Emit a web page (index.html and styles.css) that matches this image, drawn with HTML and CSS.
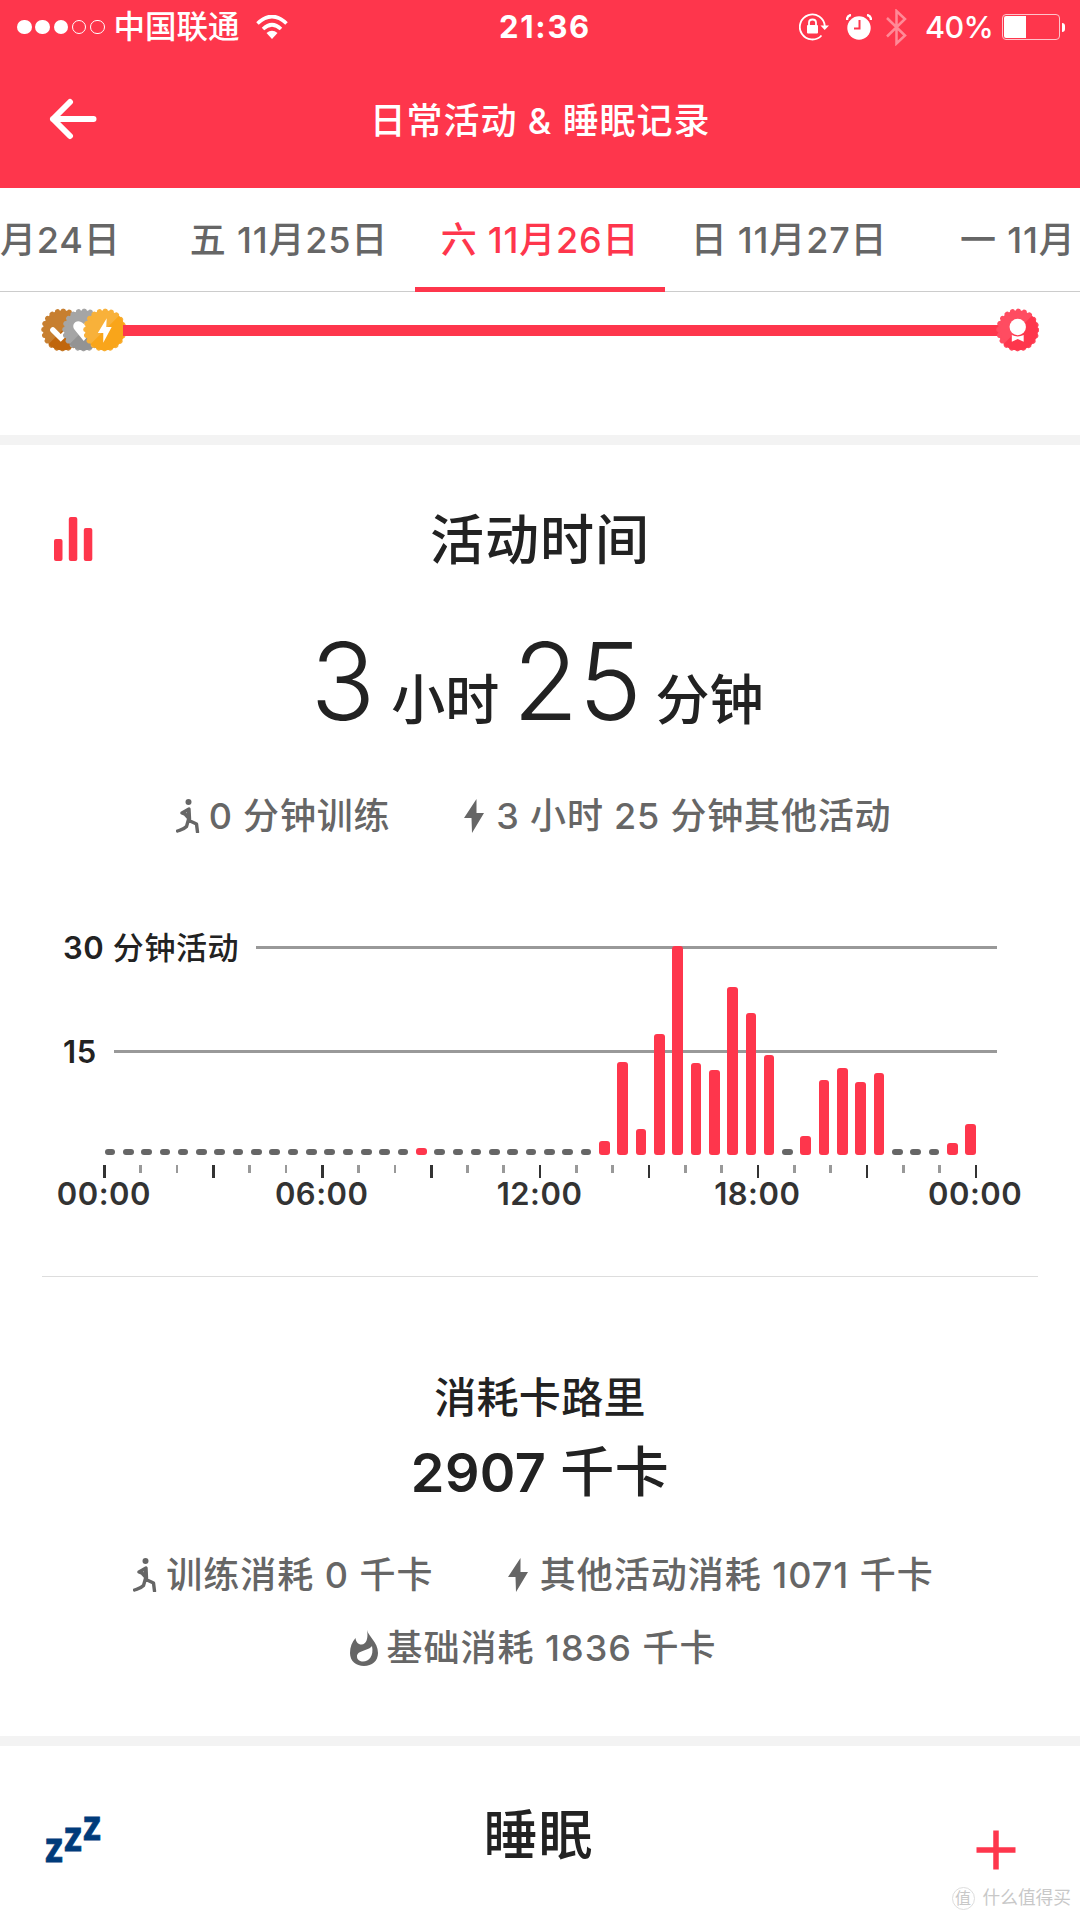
FILE: index.html
```html
<!DOCTYPE html>
<html lang="zh-CN">
<head>
    <meta charset="UTF-8">
    <meta name="viewport" content="width=device-width, initial-scale=1.0">
    <title>日常活动 & 睡眠记录</title>
    <link rel="stylesheet" href="styles.css">
</head>
<body>
    <!-- shared icons -->
    <svg class="defs" width="0" height="0">
        <symbol id="runner" viewBox="0 0 24 34">
            <circle cx="12.5" cy="3" r="3"/>
            <path d="M8.500 15L6 14L13 10L13.500 20L8.500 14.500M12.500 11L12.500 20.500L10.500 27.500C7 31 4 31 1.500 32M13 21.500L20.500 25L21.500 33" fill="none" stroke="currentColor" stroke-width="3.4" stroke-linejoin="round" stroke-linecap="round"/>
        </symbol>
        <symbol id="bolt" viewBox="0 0 20 34">
            <path d="M12.500 0L0 19H7.500L8 34L20 14H12.500Z"/>
        </symbol>
        <symbol id="flame" viewBox="0 0 28 36">
            <path fill-rule="evenodd" d="M17 0C18 6 28 12 28 23C28 31 22 36 14 36C6 36 0 31 0 23C0 17 2 12 5.500 8C6 12 8 14.500 11.500 14.500C16.500 14.500 18.500 8 17 0ZM22 16C19 21 7 20 7 26.500C7 30 10 31.500 13 31.500C19 31.500 24 26 22 16Z"/>
        </symbol>
        <symbol id="seal" viewBox="-22 -22 44 44">
            <circle r="20"/>
            <circle r="19.300" fill="none" stroke="currentColor" stroke-width="5" stroke-dasharray="0.1 5.963" stroke-linecap="round"/>
        </symbol>
    </svg>

    <header class="top">
        <div class="status-bar">
            <div class="status-left">
                <span class="dot"></span><span class="dot"></span><span class="dot"></span><span class="dot empty"></span><span class="dot empty"></span>
                <span class="carrier">中国联通</span>
                <svg class="wifi" width="32" height="25" viewBox="0 0 32 25">
                    <path d="M1.500 8.500Q16 -5.500 30.500 8.500M7 14Q16 5.500 25 14" fill="none" stroke="#fff" stroke-width="3.600"/>
                    <path d="M10.500 18Q16 13.500 21.500 18L16 24Z" fill="#fff"/>
                </svg>
            </div>
            <div class="time">21:36</div>
            <div class="status-right">
                <svg width="30" height="28" viewBox="0 0 30 28">
                    <path d="M25.800 13A12.500 12.500 0 1 0 22.500 22.500" fill="none" stroke="#fff" stroke-width="1.800"/>
                    <path d="M21.500 12.500H30L25.700 17Z" fill="#fff"/>
                    <rect x="8" y="12" width="11" height="8.500" rx="1" fill="#fff"/>
                    <path d="M10 13V9.500Q10 6.500 13.500 6.500T17 9.500V13" fill="none" stroke="#fff" stroke-width="1.800"/>
                </svg>
                <svg class="alarm" width="26" height="26" viewBox="0 0 26 26">
                    <circle cx="13" cy="14" r="11.700" fill="#fff"/>
                    <path d="M1 6Q1 1.500 5 1M25 6Q25 1.500 21 1" fill="none" stroke="#fff" stroke-width="2.400"/>
                    <path d="M13.500 6V14.500H8" fill="none" stroke="#fe364c" stroke-width="2"/>
                </svg>
                <svg class="bluetooth" width="21" height="37" viewBox="0 0 21 37">
                    <path d="M1 9L19 26.500L10.500 34.500V2L19 10L1 27.500" fill="none" stroke="#ff8a97" stroke-width="2.500"/>
                </svg>
                <span class="percent">40%</span>
                <span class="battery"><span class="battery-level"></span></span>
                <span class="battery-cap"></span>
            </div>
        </div>
        <div class="title-bar">
            <svg class="back" width="48" height="42" viewBox="0 0 48 42">
                <path d="M21 4L4 21L21 38M4 21H44.500" fill="none" stroke="#fff" stroke-width="6" stroke-linecap="round" stroke-linejoin="round"/>
            </svg>
            <h1>日常活动 &amp; 睡眠记录</h1>
        </div>
    </header>

    <nav class="tabs">
        <a class="tab first">月24日</a>
        <a class="tab">五 11月25日</a>
        <a class="tab active">六 11月26日</a>
        <a class="tab">日 11月27日</a>
        <a class="tab last">一 11月</a>
    </nav>

    <section class="goal">
        <div class="badges">
            <svg class="badge bronze" viewBox="-22 -22 44 44">
                <use href="#seal" x="-22" y="-22" width="44" height="44"/>
                <path d="M-14.500 14.500L14.500 -14.500A20.500 20.500 0 0 1 -14.500 14.500Z" fill="#c0660c"/>
                <path d="M-10 0L-2 8L10 -4" fill="none" stroke="#fff" stroke-width="5.500" stroke-linecap="round"/>
            </svg>
            <svg class="badge silver" viewBox="-22 -22 44 44">
                <use href="#seal" x="-22" y="-22" width="44" height="44"/>
                <path d="M-14.500 14.500L14.500 -14.500A20.500 20.500 0 0 1 -14.500 14.500Z" fill="#939393"/>
                <path d="M0 11L-9 0C-14 -6 -6 -13 0 -6C6 -13 14 -6 9 0Z" fill="#fff"/>
            </svg>
            <svg class="badge gold" viewBox="-22 -22 44 44">
                <use href="#seal" x="-22" y="-22" width="44" height="44"/>
                <path d="M-14.500 14.500L14.500 -14.500A20.500 20.500 0 0 1 -14.500 14.500Z" fill="#f9a51a"/>
                <path d="M2 -12L-7 3H-1.500L-1.500 13L7 -3H1.500Z" fill="#fff"/>
            </svg>
        </div>
        <div class="goal-line"></div>
        <svg class="badge red" viewBox="-22 -22 44 44">
            <use href="#seal" x="-22" y="-22" width="44" height="44"/>
            <path d="M-14.500 14.500L14.500 -14.500A20.500 20.500 0 0 1 -14.500 14.500Z" fill="#fe364c"/>
            <circle cy="-3" r="8.300" fill="#fff"/>
            <path d="M-6 5Q0 8 6 5V12L0 9L-6 12Z" fill="#fff"/>
        </svg>
    </section>

    <section class="card activity">
        <div class="card-head">
            <svg class="chart-icon" width="39" height="44" viewBox="0 0 39 44" fill="#fe364c">
                <rect x="0" y="22" width="8.500" height="22" rx="2"/>
                <rect x="14.800" y="0" width="8.500" height="44" rx="2"/>
                <rect x="29.800" y="11" width="8.500" height="33" rx="2"/>
            </svg>
            <h2>活动时间</h2>
        </div>
        <div class="duration">
            <b>3</b><span class="hour-unit">小时</span><b>25</b><span class="minute-unit">分钟</span>
        </div>
        <div class="stats active-stats">
            <div class="stat"><svg class="runner"><use href="#runner"/></svg><span>0 分钟训练</span></div>
            <div class="stat"><svg class="bolt"><use href="#bolt"/></svg><span>3 小时 25 分钟其他活动</span></div>
        </div>

        <div class="chart">
            <div class="grid-line"><span>30 <em>分钟活动</em></span><i></i></div>
            <div class="grid-line half"><span>15</span><i></i></div>
            <div class="bars" id="bars"></div>
            <div class="ticks" id="ticks"></div>
            <div class="hours">
                <span>00:00</span><span>06:00</span><span>12:00</span><span>18:00</span><span>00:00</span>
            </div>
        </div>

        <div class="calories">
            <h3>消耗卡路里</h3>
            <div class="total">2907 <em>千卡</em></div>
            <div class="stats">
                <div class="stat"><svg class="runner"><use href="#runner"/></svg><span>训练消耗 0 千卡</span></div>
                <div class="stat"><svg class="bolt"><use href="#bolt"/></svg><span>其他活动消耗 1071 千卡</span></div>
            </div>
            <div class="stats base-stats">
                <div class="stat"><svg class="flame"><use href="#flame"/></svg><span>基础消耗 1836 千卡</span></div>
            </div>
        </div>
    </section>

    <section class="card sleep">
        <svg class="zzz" width="60" height="84" viewBox="0 -24 60 84">
            <text x="0" y="44" textLength="18" lengthAdjust="spacingAndGlyphs">z</text>
            <text x="19" y="33" textLength="18" lengthAdjust="spacingAndGlyphs">z</text>
            <text x="38" y="22" textLength="18" lengthAdjust="spacingAndGlyphs">z</text>
        </svg>
        <h2>睡眠</h2>
        <svg class="plus" width="40" height="40" viewBox="0 0 40 40">
            <path d="M20 0.500V39.500M0.500 20H39.500" stroke="#fe364c" stroke-width="5.500"/>
        </svg>
    </section>

    <div class="watermark"><span class="mark">值</span>什么值得买</div>

    <script>
        // height of every half hour in px, 0 = no activity
        const halfHours = [
            0, 0, 0, 0, 0, 0, 0, 0, 0, 0, 0, 0,
            0, 0, 0, 0, 0, 7, 0, 0, 0, 0, 0, 0,
            0, 0, 0, 14, 93, 26, 121, 209, 92, 85, 168, 142,
            100, 0, 19, 75, 87, 73, 82, 0, 0, 0, 12, 31
        ];
        const bars = document.getElementById('bars');
        halfHours.forEach((h) => {
            const bar = document.createElement('span');
            bar.className = h ? 'bar' : 'bar none';
            if (h) bar.style.height = h + 'px';
            bars.appendChild(bar);
        });

        const ticks = document.getElementById('ticks');
        for (let i = 0; i <= 24; i++) {
            const tick = document.createElement('span');
            tick.className = i % 3 ? 'tick' : 'tick major';
            ticks.appendChild(tick);
        }
    </script>
</body>
</html>
```
FILE: styles.css
```css
* {
    box-sizing: border-box;
}
body {
    width: 1080px;
    height: 1920px;
    margin: 0;
    overflow: hidden;
    position: relative;
    background: #fff;
    color: #222;
    font-family: Inter, "Noto Sans CJK SC", sans-serif;
    font-weight: 500;
}
h1, h2, h3 {
    margin: 0;
    font-weight: 500;
}
em {
    font-style: normal;
    font-weight: 500;
}
.defs {
    display: block;
}

/* header */
.top {
    height: 188px;
    background: #fe364c;
    color: #fff;
}
.status-bar {
    height: 54px;
    padding: 0 15px 0 17px;
    display: grid;
    grid-template-columns: 1fr auto 1fr;
    align-items: center;
    line-height: 54px;
}
.status-left, .status-right {
    display: flex;
    align-items: center;
}
.status-right {
    justify-content: flex-end;
}
.dot {
    width: 14.5px;
    height: 14.5px;
    margin-right: 3.8px;
    border-radius: 50%;
    background: #fff;
}
.dot.empty {
    background: none;
    border: 1px solid #fff;
}
.carrier {
    margin-left: 5px;
    font-size: 31.5px;
}
.wifi {
    margin-left: 16px;
}
.time {
    padding-left: 8px;
    font-size: 31px;
    font-weight: 700;
    letter-spacing: 1.7px;
}
.alarm {
    margin-left: 17px;
}
.bluetooth {
    margin-left: 14px;
}
.percent {
    margin-left: 18px;
    font-size: 30.5px;
    letter-spacing: -0.7px;
}
.battery {
    width: 58px;
    height: 26px;
    margin-left: 9px;
    padding: 1px;
    border: 1.5px solid #ffc3ca;
    border-radius: 4px;
}
.battery-level {
    display: block;
    width: 22px;
    height: 100%;
    border-radius: 2px 0 0 2px;
    background: #fff;
}
.battery-cap {
    width: 3px;
    height: 9px;
    margin-left: 2px;
    border-radius: 0 3px 3px 0;
    background: #fff;
}
.title-bar {
    height: 130px;
    padding-left: 49px;
    display: grid;
    grid-template-columns: 48px 1fr 97px;
    align-items: center;
}
h1 {
    padding-bottom: 3px;
    text-align: center;
    font-size: 36px;
    letter-spacing: 0.9px;
}

/* days */
.tabs {
    height: 104px;
    display: flex;
    border-bottom: 1px solid #ccc;
    color: #666;
    font-size: 36px;
    line-height: 104px;
    letter-spacing: 0.8px;
    white-space: nowrap;
}
.tab {
    flex: none;
    width: 250px;
    height: 104px;
    padding-right: 2px;
    text-align: center;
}
.tab.first {
    width: 165px;
    padding-right: 45px;
    text-align: right;
}
.tab.active {
    padding-right: 0;
    color: #fe364c;
    border-bottom: 5px solid #fe364c;
}
.tab.last {
    width: 165px;
    text-align: left;
    padding-left: 45px;
}

/* goal line */
.goal {
    height: 153px;
    padding: 16px 41px 0 40.5px;
    display: flex;
    align-items: flex-start;
    border-bottom: 10px solid #f3f3f3;
}
.badges {
    display: flex;
}
.badge {
    width: 43.5px;
    height: 44px;
    flex: none;
}
.badge + .badge {
    margin-left: -22.5px;
}
.bronze {
    fill: #c77f30;
    color: #c77f30;
}
.silver {
    fill: #a5a5a5;
    color: #a5a5a5;
}
.gold {
    fill: #f8b13a;
    color: #f8b13a;
}
.red {
    fill: #ff4c61;
    color: #ff4c61;
}
.goal-line {
    flex: 1;
    height: 11px;
    margin: 17px -3px 0;
    background: #fe364c;
}

/* activity */
.activity {
    height: 1301px;
    border-bottom: 10px solid #f3f3f3;
}
.card-head {
    height: 188px;
    padding: 0 54px;
    display: grid;
    grid-template-columns: 39px 1fr 39px;
    align-items: center;
}
.card-head h2 {
    padding-bottom: 6px;
}
h2 {
    text-align: center;
    font-size: 54px;
    letter-spacing: 1px;
}
.duration {
    height: 96px;
    display: flex;
    justify-content: center;
    align-items: baseline;
    line-height: 96px;
    font-size: 54px;
}
.duration b {
    font-size: 107px;
    font-weight: 300;
}
.hour-unit {
    margin: 0 13.5px 0 16px;
}
.minute-unit {
    margin: 0 6px 0 13.5px;
}
.stats {
    height: 74px;
    padding-right: 13px;
    display: flex;
    justify-content: center;
    gap: 74px;
    color: #666;
    font-size: 36px;
    line-height: 74px;
    letter-spacing: 1px;
}
.stat {
    display: flex;
    align-items: center;
    white-space: nowrap;
    fill: #666;
}
.active-stats {
    margin-top: 50px;
    letter-spacing: 0.8px;
}
.runner {
    width: 24px;
    height: 34px;
    margin-right: 9px;
}
.bolt {
    width: 20px;
    height: 34px;
    margin-right: 12px;
}
.flame {
    width: 28px;
    height: 36px;
    margin-right: 8px;
}

/* chart */
.chart {
    height: 424px;
    margin: 0 42px;
    padding: 73.5px 41px 0 21px;
    border-bottom: 1px solid #ddd;
}
.grid-line {
    height: 42px;
    display: flex;
    align-items: center;
    font-size: 31px;
    font-weight: 600;
    line-height: 42px;
    letter-spacing: 0.6px;
}
.grid-line span {
    margin-right: 17px;
}
.grid-line i {
    flex: 1;
    height: 2.5px;
    background: #999;
}
.grid-line.half {
    margin-top: 62px;
}
.bars {
    height: 209px;
    margin: -126.5px 0 0 41.6px;
    display: flex;
    align-items: flex-end;
    gap: 7.72px;
    position: relative;
}
.bar {
    flex: none;
    width: 10.6px;
    border-radius: 3px;
    background: #fe364c;
}
.bar.none {
    height: 6px;
    background: #666;
}
.ticks {
    width: 874.5px;
    margin: 10px 0 0 40px;
    display: flex;
    justify-content: space-between;
}
.tick {
    width: 2.7px;
    height: 8px;
    background: #999;
}
.tick.major {
    height: 13px;
    background: #333;
}
.hours {
    margin: 0 -90px 0 -27px;
    display: flex;
    color: #333;
    font-size: 31px;
    font-weight: 600;
    line-height: 32px;
    letter-spacing: 0.5px;
}
.hours span {
    flex: none;
    width: 217.8px;
    padding-right: 82px;
    text-align: center;
}

/* calories */
.calories {
    padding-top: 90px;
    text-align: center;
}
h3 {
    font-size: 42px;
    line-height: 62px;
    letter-spacing: 0.3px;
}
.total {
    height: 90px;
    font-size: 54px;
    font-weight: 600;
    line-height: 88px;
    letter-spacing: 0.4px;
}
.calories .stats {
    margin-top: 18.5px;
}
.calories .base-stats {
    margin-top: -1px;
}

/* sleep */
.sleep {
    height: 174px;
    padding: 0 64px 0 45px;
    display: grid;
    grid-template-columns: 56px 1fr 40px;
    align-items: center;
}
.sleep h2 {
    line-height: 180px;
}
.zzz {
    fill: #003b7a;
    stroke: #003b7a;
    stroke-width: 0.8px;
    font: bold 41px "Noto Sans", sans-serif;
}
.plus {
    margin-top: 28px;
}
.watermark {
    position: absolute;
    right: 9px;
    bottom: 10px;
    display: flex;
    align-items: center;
    color: #c8c8c8;
    font-size: 17.7px;
    font-weight: 400;
    line-height: 24px;
}
.mark {
    width: 23px;
    height: 23px;
    margin-right: 8px;
    border: 1px solid #ddd;
    border-radius: 50%;
    text-align: center;
    line-height: 20px;
    font-size: 16px;
}
```
